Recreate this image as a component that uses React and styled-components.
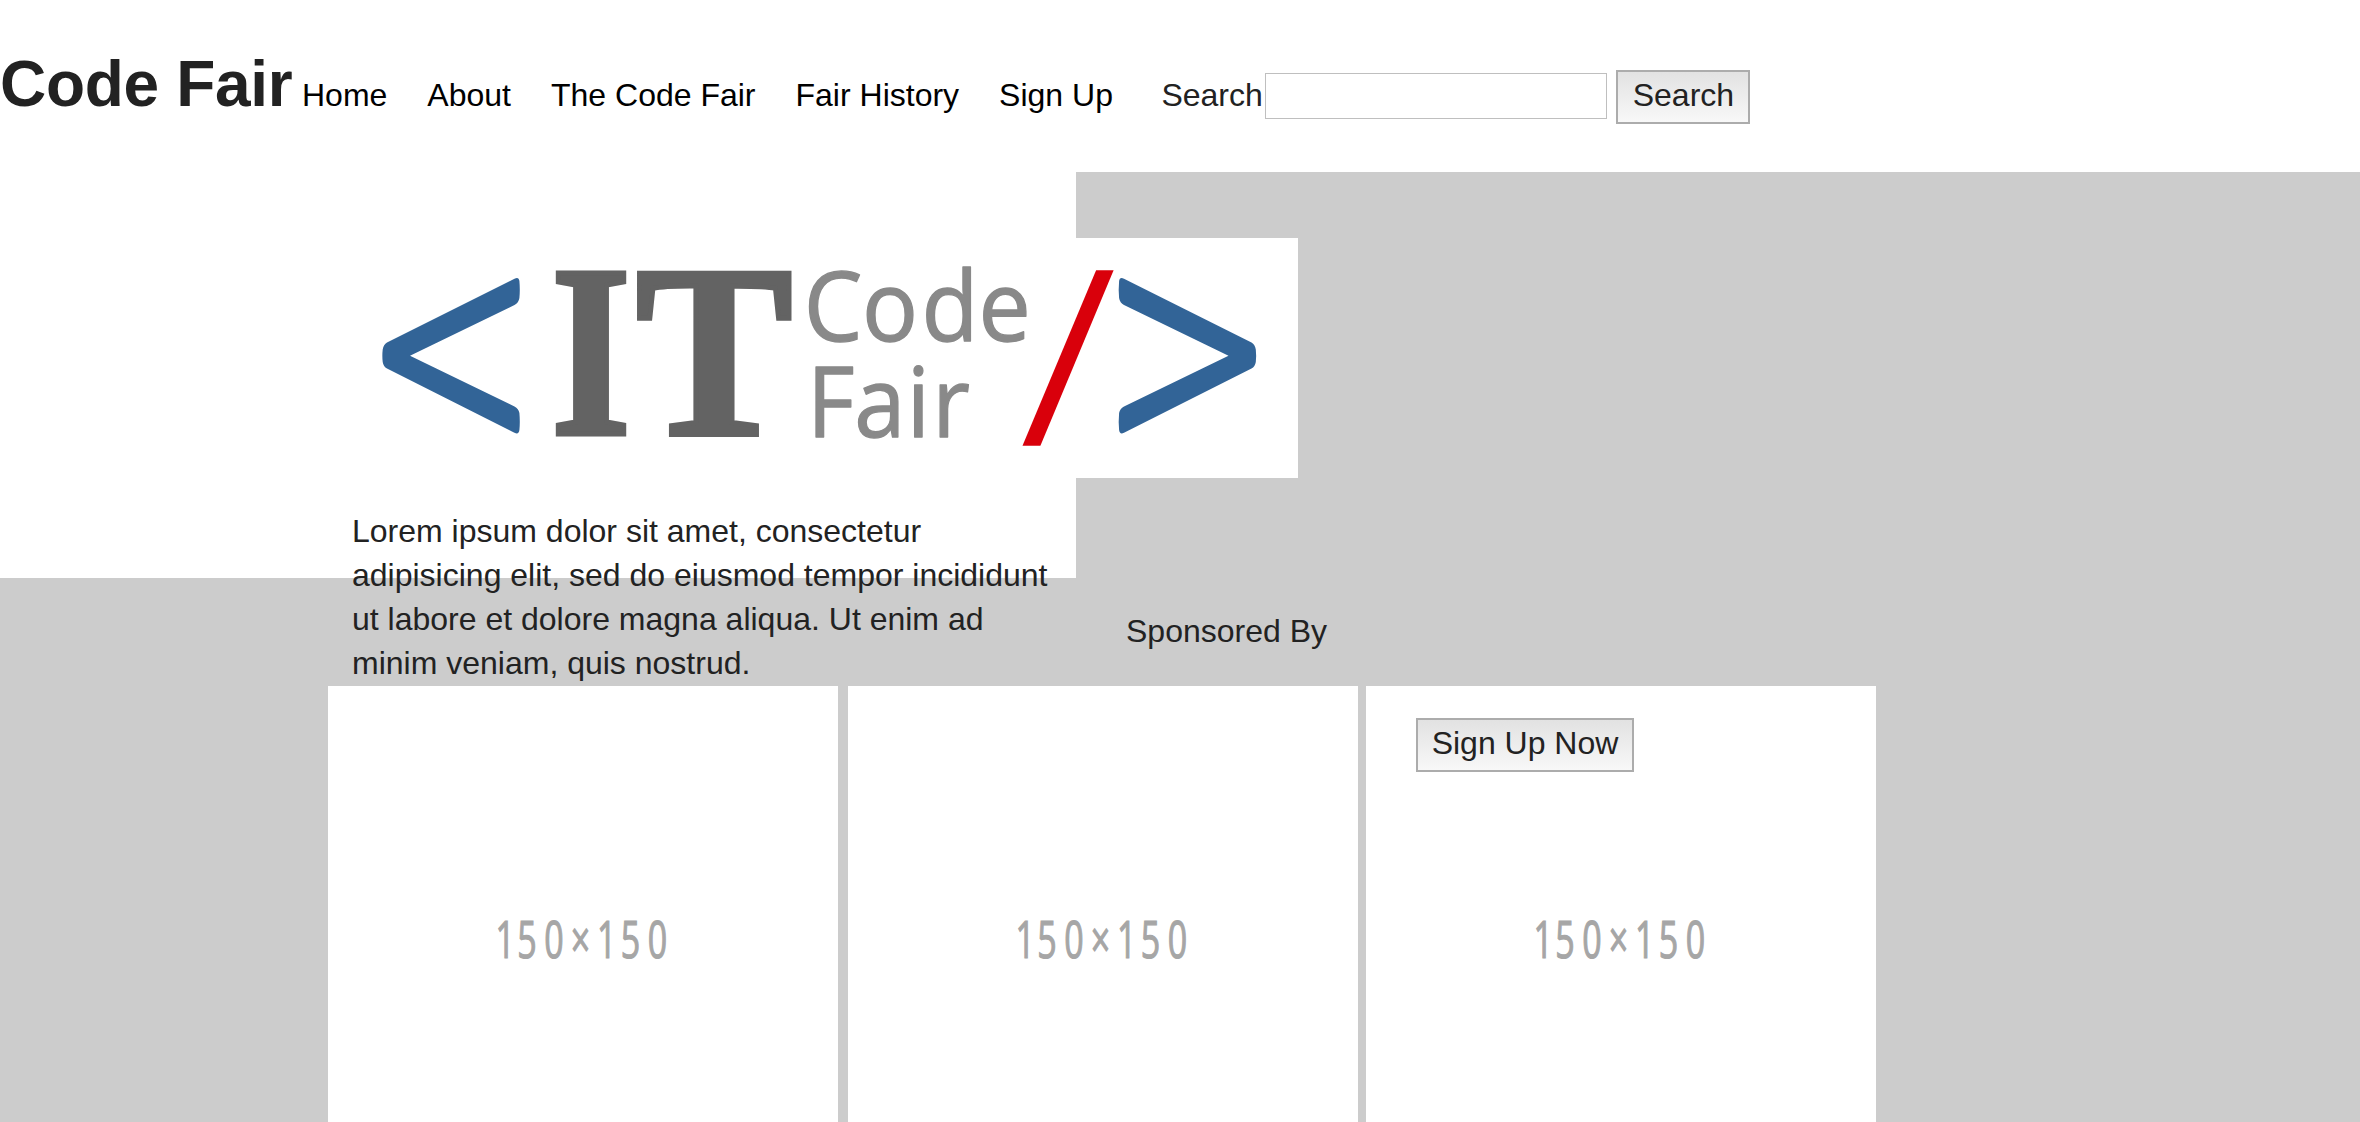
import React from "react";
import styled, { createGlobalStyle } from "styled-components";

const GlobalStyle = createGlobalStyle`
  *, *::before, *::after { box-sizing: border-box; }
  body {
    margin: 0;
    height: 100vh;
    overflow: hidden;
    background: #ccc;
    color: #222;
    font: 32px/44px "Liberation Sans", Arial, Helvetica, sans-serif;
  }
`;

const Header = styled.header`
  display: flex;
  align-items: baseline;
  height: 172px;
  padding-top: 40px;
  background: #fff;
  white-space: nowrap;
`;

const SiteTitle = styled.h1`
  margin: 0;
  width: 302px;
  font-size: 64px;
  line-height: 88px;
  font-weight: bold;
  letter-spacing: -0.3px;
`;

const Nav = styled.nav`
  display: flex;
  gap: 40px;
`;

const NavLink = styled.a`
  color: #000;
  text-decoration: none;
`;

const SearchForm = styled.form`
  display: flex;
  align-items: baseline;
  margin-left: 48.5px;
`;

const SearchInput = styled.input`
  align-self: flex-start;
  width: 342px;
  height: 46px;
  margin: 3px 9px 0 0;
  padding: 0 8px;
  border: 1px solid #bfbfbf;
  border-radius: 0;
  background: #fff;
  font: inherit;
  outline: none;
`;

const SearchLabel = styled.label`
  width: 104px;
`;

const Button = styled.button`
  width: ${(p) => p.$width}px;
  height: 54px;
  padding: 1px 0 5px;
  border: 2px solid #acacac;
  border-radius: 0;
  background: linear-gradient(#e2e2e2, #f8f8f8);
  color: #222;
  font: inherit;
  white-space: nowrap;
`;

const Hero = styled.section`
  display: flex;
  height: 514px;
`;

const Intro = styled.div`
  flex: none;
  width: 1076px;
  height: 406px;
  padding: 66px 0 0 352px;
  background: #fff;
`;

const LogoImage = styled.svg`
  display: block;
  width: 946px;
  height: 240px;
  background: #fff;
`;

const Blurb = styled.p`
  width: 710px;
  margin: 31px 0 0;
`;

const Sponsor = styled.p`
  align-self: flex-end;
  margin: 0 0 33px 50px;
`;

const Cards = styled.section`
  display: flex;
  height: 436px;
  margin-left: 328px;
  overflow: hidden;
`;

const Card = styled.article`
  display: grid;
  flex: none;
  width: 510px;
  height: 510px;
  margin-right: ${(p) => p.$gap || 0}px;
  background: #fff;

  > * { grid-area: 1 / 1; }
`;

const PlaceholderImage = styled.svg`
  width: 510px;
  height: 510px;
`;

const CardAction = styled.div`
  padding: 32px 50px;
`;

const BRACKET =
  "M514.5 278.8 Q518.7 276.4 519.4 281 Q520.2 290 519.4 298 Q518.6 303 514.5 305 L410 355.7 L514.5 406.5 Q518.6 408.6 519.4 413 Q520.2 422 519.4 430 Q518.7 435 514.5 432.7 L387 368.6 Q383.5 366.8 382.7 362 Q382 355.7 382.7 349.5 Q383.5 344.6 387 342.6 Z";

function Logo() {
  return (
    <LogoImage viewBox="352 238 946 240" role="img" aria-label="IT Code Fair">
      <path d={BRACKET} fill="#326497" />
      <g
        fill="#636363"
        stroke="#636363"
        strokeWidth="5"
        fontFamily="Liberation Serif"
        fontWeight="bold"
        fontSize="245"
      >
        <text transform="translate(551 433.8) scale(0.84 1)">I</text>
        <text transform="translate(635.8 433.8) scale(0.96 1)">T</text>
      </g>
      <g
        fill="#898989"
        stroke="#898989"
        strokeWidth="1.3"
        strokeLinejoin="round"
        fontFamily="Open Sans"
        fontSize="97"
      >
        <text transform="translate(800 341.3) scale(0.96 1)" x="3.8 64.6 126.6 186">Code</text>
        <text transform="translate(800 436.8) scale(0.95 1)" x="7.4 57 112.3 139.2">Fair</text>
      </g>
      <path d="M1096.1 270.3H1113.6L1040.4 445.7H1022.5Z" fill="#d9000b" />
      <path d={BRACKET} fill="#326497" transform="translate(1638.5 0) scale(-1 1)" />
    </LogoImage>
  );
}

function Placeholder() {
  return (
    <PlaceholderImage viewBox="0 0 510 510">
      <text
        transform="translate(0 272) scale(0.66 1)"
        x="253.7 286.6 327.5 367.7 407.4 443.4 484.5"
        fill="#a6a6a6"
        stroke="#a6a6a6"
        strokeWidth="1.2"
        fontFamily="Open Sans"
        fontSize="51.5"
      >
        150×150
      </text>
    </PlaceholderImage>
  );
}

const LINKS = ["Home", "About", "The Code Fair", "Fair History", "Sign Up"];

export default function App() {
  return (
    <>
      <GlobalStyle />
      <Header>
        <SiteTitle>Code Fair</SiteTitle>
        <Nav>
          {LINKS.map((l) => (
            <NavLink key={l}>{l}</NavLink>
          ))}
        </Nav>
        <SearchForm>
          <SearchLabel htmlFor="q">Search</SearchLabel>
          <SearchInput id="q" />
          <Button type="button" $width={134}>Search</Button>
        </SearchForm>
      </Header>
      <main>
        <Hero>
          <Intro>
            <Logo />
            <Blurb>
              Lorem ipsum dolor sit amet, consectetur adipisicing elit, sed do eiusmod tempor
              incididunt ut labore et dolore magna aliqua. Ut enim ad minim veniam, quis nostrud.
            </Blurb>
          </Intro>
          <Sponsor>Sponsored By</Sponsor>
        </Hero>
        <Cards>
          <Card $gap={10}><Placeholder /></Card>
          <Card $gap={8}><Placeholder /></Card>
          <Card>
            <Placeholder />
            <CardAction>
              <Button type="button" $width={218}>Sign Up Now</Button>
            </CardAction>
          </Card>
        </Cards>
      </main>
    </>
  );
}
